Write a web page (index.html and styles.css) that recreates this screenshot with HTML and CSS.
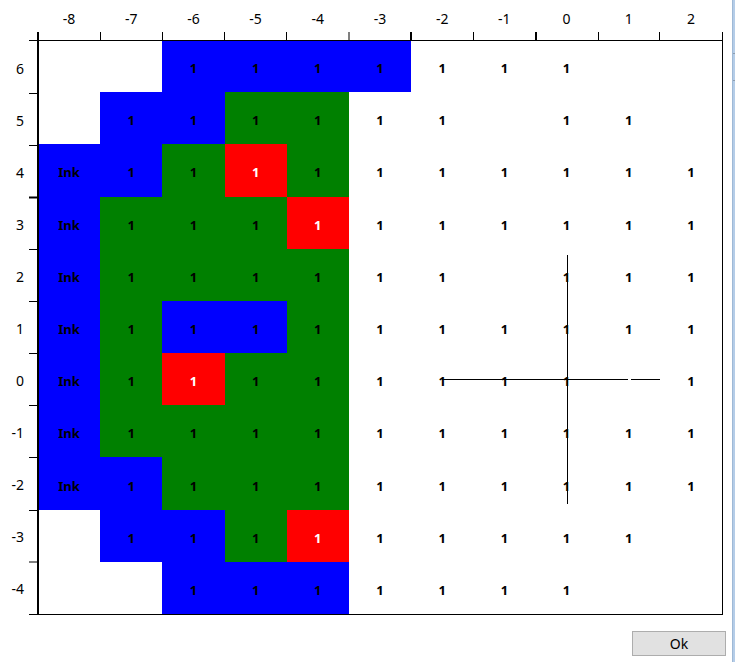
FILE: index.html
```html
<!DOCTYPE html>
<html>
<head>
<meta charset="utf-8">
<link rel="stylesheet" href="styles.css">
</head>
<body>
<div class="window">
  <div class="main">
    <div class="chart">
      <div class="top-labels">
        <span>-8</span><span>-7</span><span>-6</span><span>-5</span><span>-4</span><span>-3</span><span>-2</span><span>-1</span><span>0</span><span>1</span><span>2</span>
      </div>
      <div class="left-labels">
        <span>6</span><span>5</span><span>4</span><span>3</span><span>2</span><span>1</span><span>0</span><span>-1</span><span>-2</span><span>-3</span><span>-4</span>
      </div>
      <div class="cells">
        <!-- row 6 -->
        <div class="c"></div><div class="c"></div><div class="c b">1</div><div class="c b">1</div><div class="c b">1</div><div class="c b">1</div><div class="c">1</div><div class="c">1</div><div class="c">1</div><div class="c"></div><div class="c"></div>
        <!-- row 5 -->
        <div class="c"></div><div class="c b">1</div><div class="c b">1</div><div class="c g">1</div><div class="c g">1</div><div class="c">1</div><div class="c">1</div><div class="c"></div><div class="c">1</div><div class="c">1</div><div class="c"></div>
        <!-- row 4 -->
        <div class="c b">Ink</div><div class="c b">1</div><div class="c g">1</div><div class="c r">1</div><div class="c g">1</div><div class="c">1</div><div class="c">1</div><div class="c">1</div><div class="c">1</div><div class="c">1</div><div class="c">1</div>
        <!-- row 3 -->
        <div class="c b">Ink</div><div class="c g">1</div><div class="c g">1</div><div class="c g">1</div><div class="c r">1</div><div class="c">1</div><div class="c">1</div><div class="c">1</div><div class="c">1</div><div class="c">1</div><div class="c">1</div>
        <!-- row 2 -->
        <div class="c b">Ink</div><div class="c g">1</div><div class="c g">1</div><div class="c g">1</div><div class="c g">1</div><div class="c">1</div><div class="c">1</div><div class="c"></div><div class="c">1</div><div class="c">1</div><div class="c">1</div>
        <!-- row 1 -->
        <div class="c b">Ink</div><div class="c g">1</div><div class="c b">1</div><div class="c b">1</div><div class="c g">1</div><div class="c">1</div><div class="c">1</div><div class="c">1</div><div class="c">1</div><div class="c">1</div><div class="c">1</div>
        <!-- row 0 -->
        <div class="c b">Ink</div><div class="c g">1</div><div class="c r">1</div><div class="c g">1</div><div class="c g">1</div><div class="c">1</div><div class="c">1</div><div class="c">1</div><div class="c">1</div><div class="c"></div><div class="c">1</div>
        <!-- row -1 -->
        <div class="c b">Ink</div><div class="c g">1</div><div class="c g">1</div><div class="c g">1</div><div class="c g">1</div><div class="c">1</div><div class="c">1</div><div class="c">1</div><div class="c">1</div><div class="c">1</div><div class="c">1</div>
        <!-- row -2 -->
        <div class="c b">Ink</div><div class="c b">1</div><div class="c g">1</div><div class="c g">1</div><div class="c g">1</div><div class="c">1</div><div class="c">1</div><div class="c">1</div><div class="c">1</div><div class="c">1</div><div class="c">1</div>
        <!-- row -3 -->
        <div class="c"></div><div class="c b">1</div><div class="c b">1</div><div class="c g">1</div><div class="c r">1</div><div class="c">1</div><div class="c">1</div><div class="c">1</div><div class="c">1</div><div class="c">1</div><div class="c"></div>
        <!-- row -4 -->
        <div class="c"></div><div class="c"></div><div class="c b">1</div><div class="c b">1</div><div class="c b">1</div><div class="c">1</div><div class="c">1</div><div class="c">1</div><div class="c">1</div><div class="c"></div><div class="c"></div>
      </div>
      <svg class="frame" width="732" height="620" viewBox="0 0 732 620">
        <g stroke="#000" stroke-width="1" fill="none">
          <!-- top axis -->
          <line x1="29" y1="40.5" x2="723" y2="40.5"/>
          <!-- bottom axis -->
          <line x1="29" y1="614.5" x2="723" y2="614.5"/>
          <!-- right border -->
          <line x1="722.5" y1="32" x2="722.5" y2="615"/>
          <!-- top ticks -->
          <line x1="100.5" y1="32" x2="100.5" y2="40"/>
          <line x1="162.5" y1="32" x2="162.5" y2="40"/>
          <line x1="224.5" y1="32" x2="224.5" y2="40"/>
          <line x1="286.5" y1="32" x2="286.5" y2="40"/>
          <line x1="349" y1="32" x2="349" y2="40"/>
          <line x1="411" y1="32" x2="411" y2="40" stroke-width="2"/>
          <line x1="473.5" y1="32" x2="473.5" y2="40"/>
          <line x1="536" y1="32" x2="536" y2="40" stroke-width="2"/>
          <line x1="598.5" y1="32" x2="598.5" y2="40"/>
          <line x1="659.5" y1="32" x2="659.5" y2="40"/>
          <!-- left ticks -->
          <line x1="29" y1="93.5" x2="38" y2="93.5"/>
          <line x1="29" y1="145.5" x2="38" y2="145.5"/>
          <line x1="29" y1="197.5" x2="38" y2="197.5" stroke-width="2"/>
          <line x1="29" y1="249.5" x2="38" y2="249.5"/>
          <line x1="29" y1="301.5" x2="38" y2="301.5"/>
          <line x1="29" y1="353.5" x2="38" y2="353.5"/>
          <line x1="29" y1="405.5" x2="38" y2="405.5"/>
          <line x1="29" y1="457.5" x2="38" y2="457.5"/>
          <line x1="29" y1="510.5" x2="38" y2="510.5"/>
          <line x1="29" y1="562" x2="38" y2="562"/>
          <!-- left axis -->
          <line x1="38" y1="32" x2="38" y2="615" stroke-width="2"/>
          <!-- crosshair -->
          <line x1="567.5" y1="255" x2="567.5" y2="504"/>
          <line x1="442" y1="379.5" x2="628" y2="379.5"/>
          <line x1="631" y1="379.5" x2="660" y2="379.5"/>
        </g>
      </svg>
    </div>
    <div class="footer">
      <button class="ok">Ok</button>
    </div>
  </div>
  <div class="edge">
    <div class="edge-mark"></div>
  </div>
</div>
</body>
</html>
```

FILE: styles.css
```css
html, body {
  margin: 0;
  padding: 0;
  background: #ffffff;
}

.window {
  display: flex;
  width: 735px;
  height: 662px;
  overflow: hidden;
  font-family: "Noto Sans", "Open Sans", "DejaVu Sans", sans-serif;
  color: #000;
}

.main {
  width: 732px;
  display: flex;
  flex-direction: column;
}

.edge {
  width: 3px;
  background: #b5cde8;
  border-left: 1px solid #9fb9d6;
  box-sizing: border-box;
  padding-top: 53px;
}

.edge-mark {
  height: 28px;
  border-top: 1px solid #8c9cae;
  border-bottom: 1px solid #8c9cae;
  box-sizing: border-box;
}

.chart {
  position: relative;
  display: grid;
  grid-template-columns: 38px 684px;
  grid-template-rows: 40px 574px;
  height: 614px;
}

.top-labels {
  grid-column: 2;
  grid-row: 1;
  display: grid;
  grid-template-columns: repeat(11, 1fr);
  font-size: 14px;
  line-height: 14px;
  padding-top: 12px;
  box-sizing: border-box;
}

.top-labels span {
  text-align: center;
}

.left-labels {
  grid-column: 1;
  grid-row: 2;
  display: grid;
  grid-template-rows: repeat(11, 1fr);
  font-size: 14px;
  padding-right: 14px;
  padding-top: 2px;
}

.left-labels span {
  display: flex;
  align-items: center;
  justify-content: flex-end;
}

.cells {
  grid-column: 2;
  grid-row: 2;
  display: grid;
  grid-template-columns: repeat(11, 1fr);
  grid-template-rows: repeat(11, 1fr);
}

.c {
  display: flex;
  align-items: center;
  justify-content: center;
  font-size: 13px;
  font-weight: bold;
  padding-top: 4px;
  box-sizing: border-box;
}

.b { background: #0000ff; }
.g { background: #008000; }
.r { background: #ff0000; color: #ffffff; }

.frame {
  position: absolute;
  left: 0;
  top: 0;
  pointer-events: none;
}

.footer {
  display: flex;
  justify-content: flex-end;
  padding-top: 17px;
}

.ok {
  width: 94px;
  height: 25px;
  margin-right: 6px;
  background: #e1e1e1;
  border: 1px solid #adadad;
  border-radius: 0;
  font-family: "Noto Sans", "Open Sans", sans-serif;
  font-size: 14px;
  color: #000;
  padding: 0;
}
```
